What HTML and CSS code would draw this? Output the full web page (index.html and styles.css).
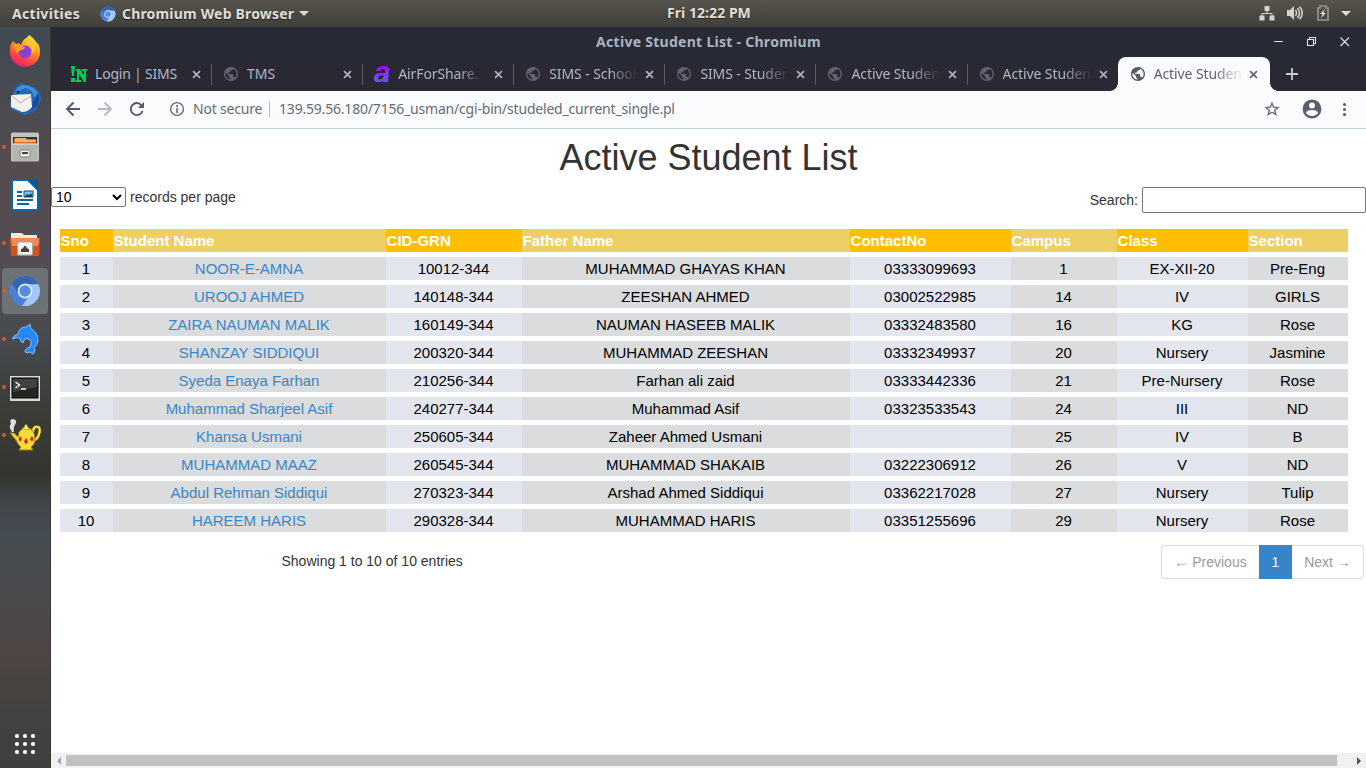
FILE: index.html
```html
<!DOCTYPE html>
<html lang="en">
<head>
<meta charset="utf-8">
<title>Active Student List</title>
<link rel="stylesheet" href="styles.css">
</head>
<body>
<svg class="defs" width="0" height="0">
  <symbol id="globe" viewBox="0.6 0.6 22.8 22.8"><path fill="currentColor" d="M12 2C6.48 2 2 6.48 2 12s4.48 10 10 10 10-4.48 10-10S17.52 2 12 2zm-1 17.93c-3.95-.49-7-3.85-7-7.93 0-.62.08-1.21.21-1.79L9 15v1c0 1.1.9 2 2 2v1.93zm6.9-2.54c-.26-.81-1-1.39-1.9-1.39h-1v-3c0-.55-.45-1-1-1H8v-2h2c.55 0 1-.45 1-1V7h2c1.1 0 2-.9 2-2v-.41c2.93 1.19 5 4.06 5 7.41 0 2.08-.8 3.97-2.1 5.39z"/></symbol>
  <symbol id="close" viewBox="0 0 10 10"><path d="M1.2 1.2 8.8 8.8M8.8 1.2 1.2 8.8" stroke="currentColor" stroke-width="1.8"/></symbol>
  <symbol id="chromium" viewBox="0 0 32 32"><circle cx="16" cy="16" r="15" fill="#5b8bdf"/><path d="M16 16 3 8.5A15 15 0 0 0 13 30.7L20 19z" fill="#4c7fd6"/><path d="M3 8.5A15 15 0 0 1 29.4 9.3H16L9.8 19.5z" fill="#3465b5"/><path d="M16 9.3h13.3A15 15 0 0 1 13.2 30.8L21.8 19z" fill="#a5c7f7"/><circle cx="16" cy="16" r="7.4" fill="#dce9fc"/><circle cx="16" cy="16" r="5.7" fill="#558ce5"/></symbol>
</svg>
<header class="topbar">
  <div class="top-left"><span class="activities">Activities</span><svg class="app-logo"><use href="#chromium"/></svg><span class="app-name">Chromium Web Browser</span><i class="caret"></i></div>
  <div class="clock">Fri 12:22 PM</div>
  <div class="tray">
    <svg width="16" height="16"><path d="M5.5 1h5v5h-5zM.5 10.500h5v5h-5zM10.500 10.500h5v5h-5z" fill="#d5d3cf"/><path d="M8 6v2.500M3 11V8.500h10V11" stroke="#d5d3cf" fill="none"/></svg>
    <svg width="16" height="16"><path d="M0 5h3l4-4v14l-4-4H0z" fill="#d5d3cf"/><path d="M8.500 5q2 3 0 6M10.500 3q4 5 0 10M12.500 1.500q5.500 6.500 0 13" stroke="#d5d3cf" stroke-width="1.500" fill="none"/></svg>
    <svg width="14" height="16"><path d="M4 3V1h6v2h2v12H2V3z" stroke="#96948e" stroke-width="1.700" fill="none"/><path d="M9 4 4 9h2.500L5 13l5-5H7.500z" fill="#dedcd8"/></svg>
    <i class="caret"></i>
  </div>
</header>
<div class="desktop">
<nav class="dock">
  <div class="app"><svg viewBox="0 0 32 32"><defs><linearGradient id="ff" x1=".8" y1="0" x2=".3" y2="1"><stop stop-color="#fff34f"/><stop offset=".4" stop-color="#ff9a24"/><stop offset=".75" stop-color="#ff4242"/><stop offset="1" stop-color="#e51e79"/></linearGradient><radialGradient id="fp"><stop stop-color="#7746ce"/><stop offset="1" stop-color="#9a3bda"/></radialGradient></defs><path d="M4 6 7 9 10 8 12 10C14 3 19 3 20 0C25 3 26 6 28 8Q31 10 31 17A15 15 0 0 1 1 17Q0 11 4 6z" fill="url(#ff)"/><circle cx="16" cy="17" r="6.500" fill="url(#fp)"/><path d="M4 9q5-1 7 2l5 1q-1 3-4 3-3 1-3 4-4-4-5-10" fill="#ff9b28"/><path d="M15 10q6-1 8 3l-1-1q2 4 0 7 6-3 3-10-3-5-5-8-2 5-5 9" fill="#ffc52e"/></svg></div>
  <div class="app"><svg viewBox="0 0 32 32"><path d="M4 11C5 4 10 0 13 0l2 2C25 1 32 8 32 16q-1 5-4 7 1 4-6 8l2-3q-3 3-8 4L3 27Q-1 20 4 11" fill="#2267b9"/><path d="M14 2Q8 3 6 10l10-5q8 0 9 10l5-4Q24 2 14 2" fill="#3f93d8"/><path d="m2 12 20-1 1 13q-4 5-10 5L2 24z" fill="#f4f1ea"/><path d="m2 12 9 8 11-7" fill="none" stroke="#b9b4ac"/><circle cx="9" cy="9" r="1.500" fill="#17314d"/><path d="m25 17 4-8q3 8-2 15l-5 3z" fill="#1a4d9d"/></svg></div>
  <div class="app on"><svg viewBox="0 0 32 32"><rect x="2" y="1.500" width="28" height="29" rx="1.500" fill="#c2c2bf"/><path d="M4 6h24v8H4z" fill="#38332e"/><path d="M5 8h22v6H5z" fill="#df6e25"/><path d="M6 7h11l1 2h9v2H6z" fill="#f3b26c"/><path d="M3 13h26v16.500H3z" fill="#b4b4b1"/><path d="M3 13h26" stroke="#e7e7e5"/><rect x="11" y="19" width="10" height="7" rx="1.500" fill="#eee" stroke="#7c7c79"/><path d="M13 21h6v2h-6z" fill="#444"/></svg></div>
  <div class="app"><svg viewBox="0 0 32 32"><path d="M4 1h15l10 10v20H3V1z" fill="#fff" stroke="#0369a3" stroke-width="2"/><path d="M19 0h10v11z" fill="#07598b"/><path d="M8 13h5M8 17h5M8 21h16M8 25h12" stroke="#0369a3" stroke-width="2"/><path d="M15 12h9v6h-9z" fill="#74c9ef" stroke="#12496b"/><path d="m15 18 3-3 2 1 2-2 2 4z" fill="#17445f"/></svg></div>
  <div class="app on"><svg viewBox="0 -3 32 32"><path d="M2 6V3h11l2 2h13v5H2z" fill="#eee8e1"/><path d="M1 8h30l-1 18H2z" fill="#d5511f"/><path d="M2 8h28l-1 8H3z" fill="#ec8b59"/><rect x="8.500" y="12" width="15" height="13" rx="1.500" fill="#f5f5ef" stroke="#aaa89f"/><path d="M12 22v-3h1.500v-1.500h1.500V16h2v1.500h1.500V19H20v3z" fill="#40403c"/></svg></div>
  <div class="app on selected"><svg><use href="#chromium"/></svg></div>
  <div class="app on"><svg viewBox="0 0 32 32"><path d="M3 16Q5 12 9 11 10 4 17 4l4-3 .5 4q8 5 7.500 13-.5 4-3.500 6.500Q27 28 24 31l-3-2q-3 2-5 0 0-4 5-5 3-7-2-8l-3-1-2 5q-3-1-3-5-4-1-8 1z" fill="#2389f7" stroke="#a5d2ff" stroke-width=".8"/></svg></div>
  <div class="app on"><svg viewBox="0 0 32 32"><rect x="1" y="5" width="30" height="25" fill="#d8d8d6"/><rect x="3" y="7" width="26" height="20" fill="#242523" stroke="#060606"/><path d="M4 8h24v8L4 21z" fill="#41423f"/><path d="m6.500 11 4 3-4 3M12 18h5" stroke="#f4f4f4" stroke-width="1.500" fill="none"/></svg></div>
  <div class="app on"><svg viewBox="0 0 32 32"><path d="M24 13q0-6 5-5 3 1 1 7-1 5-6 7" fill="none" stroke="#9e8d12" stroke-width="3"/><path d="M24 13q0-6 5-5 3 1 1 7-1 5-6 7" fill="none" stroke="#ffe958" stroke-width="1.800"/><path d="M1 14h4l4 4q0-6 4-8h9q4 3 4 10 0 6-4 8l2 3H10l2-3q-3-2-5-7z" fill="#f6dc35" stroke="#958516"/><path d="M13 10q4-5 8 0z" fill="#ffe969"/><circle cx="17" cy="7" r="1.500" fill="#ffe969"/><path d="m11 17 2 3-2 3-1.500-3zm6 2 2 3.500-2 3-2-3zm6-2 1.500 3-1.500 3-2-3z" fill="#d61e34"/><path d="M3 13Q-1 7 2 5 0 0 4 0q5 1 2 6-2 3-1 7" fill="#dedede"/></svg></div>
  <svg class="launcher" viewBox="0 0 20 20"><path d="M2 2h.01M10 2h.01M18 2h.01M2 10h.01M10 10h.01M18 10h.01M2 18h.01M10 18h.01M18 18h.01" stroke="#fff" stroke-width="4.200" stroke-linecap="round"/></svg>
</nav>
<section class="window">
  <div class="titlebar"><h2>Active Student List - Chromium</h2>
    <svg class="window-controls" width="78" height="14"><path d="M1 6.500h9M34.500 4.500h6v6h-6zM36.500 4.500v-2h6v6h-2M67.500 2.500 76 11M76 2.500 67.500 11" fill="none" stroke="#e2e3e5" stroke-width="1.100"/></svg></div>
  <div class="tabs">
    <div class="tab first"><svg class="fav" viewBox="0 0 16 16"><path d="M0 0h4l-1 10H1zM0 12h4v4H0zM5 3h4l4 7V5h-2V3h5v2h-1v11h-2L8 8v6h2v2H5v-2h1V5H5z" fill="#09ca54"/></svg><span class="tab-title">Login | SIMS</span><svg class="x"><use href="#close"/></svg></div>
    <div class="tab"><svg class="fav"><use href="#globe"/></svg><span class="tab-title">TMS</span><svg class="x"><use href="#close"/></svg></div>
    <div class="tab"><svg class="fav" viewBox="0 0 16 16"><defs><linearGradient id="air" x2="0" y2="1"><stop stop-color="#a500ff"/><stop offset="1" stop-color="#5b63ff"/></linearGradient></defs><path d="M2 5Q3 0 10 0q6 0 5 5l-1 11H9v-2q-2 3-6 2-4-1-3-5 1-4 6-4h5l.4-2Q11 3 9 3 7 3 6 5zM10 9.500H7Q4 9.500 4 12q0 2 2 1.500Q9 13 10 9.500z" fill="url(#air)"/></svg><span class="tab-title fade">AirForShare.</span><svg class="x"><use href="#close"/></svg></div>
    <div class="tab"><svg class="fav"><use href="#globe"/></svg><span class="tab-title fade">SIMS - School</span><svg class="x"><use href="#close"/></svg></div>
    <div class="tab"><svg class="fav"><use href="#globe"/></svg><span class="tab-title fade">SIMS - Studen</span><svg class="x"><use href="#close"/></svg></div>
    <div class="tab"><svg class="fav"><use href="#globe"/></svg><span class="tab-title fade">Active Studen</span><svg class="x"><use href="#close"/></svg></div>
    <div class="tab"><svg class="fav"><use href="#globe"/></svg><span class="tab-title fade">Active Studen</span><svg class="x"><use href="#close"/></svg></div>
    <div class="tab active"><svg class="fav"><use href="#globe"/></svg><span class="tab-title fade">Active Studen</span><svg class="x"><use href="#close"/></svg></div>
    <svg class="new-tab" width="12" height="12"><path d="M6 0v12M0 6h12" stroke="#c1cdd5" stroke-width="1.800"/></svg>
  </div>
  <div class="toolbar">
    <svg class="nav-icons" width="82" height="18"><g fill="none" stroke-width="1.900"><path d="M15 9H2M8.500 2.500 2 9l6.500 6.500" stroke="#555966"/><path d="M33 9h13M39.500 2.500 46 9l-6.500 6.500" stroke="#b7b8bd"/><path d="M76.500 5.300A6 6 0 1 0 77.500 11" stroke="#555966"/></g><path d="M79 2v6h-6z" fill="#555966"/></svg>
    <svg class="info" width="16" height="16"><circle cx="8" cy="8" r="6.400" fill="none" stroke="#676b74" stroke-width="1.400"/><path d="M8 4v2M8 7v5" stroke="#676b74" stroke-width="1.600"/></svg>
    <span class="secure">Not secure</span><span class="address">139.59.56.180/7156_usman/cgi-bin/studeled_current_single.pl</span>
    <svg class="toolbar-actions" width="90" height="20"><path d="m10 4.200 1.700 4 4.300.3-3.300 2.800 1.100 4.200-3.800-2.300-3.800 2.300 1.100-4.200L4 8.500l4.300-.3z" fill="none" stroke="#666a75" stroke-width="1.400"/><circle cx="50" cy="10" r="9.400" fill="#5a5d6d"/><circle cx="50" cy="6.500" r="3" fill="#fafbfd"/><path d="M44 14q0-3 6-3t6 3q-2 3-6 3t-6-3" fill="#fafbfd"/><path d="M82.500 5.500h.01M82.500 10.500h.01M82.500 15.500h.01" stroke="#5b5e69" stroke-width="3.100" stroke-linecap="round"/></svg>
  </div>
  <main class="page">
    <h1>Active Student List</h1>
    <div class="filters"><label class="length"><select><option>10</option></select> records per page</label><label class="search">Search: <input type="text"></label></div>
    <table><colgroup><col class="sno"><col class="student"><col class="cid"><col class="father"><col class="contact"><col class="campus"><col class="class"><col class="section"></colgroup>
    <thead><tr><th>Sno</th><th>Student Name</th><th>CID-GRN</th><th>Father Name</th><th>ContactNo</th><th>Campus</th><th>Class</th><th>Section</th></tr></thead>
    <tbody>
    <tr><td>1</td><td><a>NOOR-E-AMNA</a></td><td>10012-344</td><td>MUHAMMAD GHAYAS KHAN</td><td>03333099693</td><td>1</td><td>EX-XII-20</td><td>Pre-Eng</td></tr>
    <tr><td>2</td><td><a>UROOJ AHMED</a></td><td>140148-344</td><td>ZEESHAN AHMED</td><td>03002522985</td><td>14</td><td>IV</td><td>GIRLS</td></tr>
    <tr><td>3</td><td><a>ZAIRA NAUMAN MALIK</a></td><td>160149-344</td><td>NAUMAN HASEEB MALIK</td><td>03332483580</td><td>16</td><td>KG</td><td>Rose</td></tr>
    <tr><td>4</td><td><a>SHANZAY SIDDIQUI</a></td><td>200320-344</td><td>MUHAMMAD ZEESHAN</td><td>03332349937</td><td>20</td><td>Nursery</td><td>Jasmine</td></tr>
    <tr><td>5</td><td><a>Syeda Enaya Farhan</a></td><td>210256-344</td><td>Farhan ali zaid</td><td>03333442336</td><td>21</td><td>Pre-Nursery</td><td>Rose</td></tr>
    <tr><td>6</td><td><a>Muhammad Sharjeel Asif</a></td><td>240277-344</td><td>Muhammad Asif</td><td>03323533543</td><td>24</td><td>III</td><td>ND</td></tr>
    <tr><td>7</td><td><a>Khansa Usmani</a></td><td>250605-344</td><td>Zaheer Ahmed Usmani</td><td></td><td>25</td><td>IV</td><td>B</td></tr>
    <tr><td>8</td><td><a>MUHAMMAD MAAZ</a></td><td>260545-344</td><td>MUHAMMAD SHAKAIB</td><td>03222306912</td><td>26</td><td>V</td><td>ND</td></tr>
    <tr><td>9</td><td><a>Abdul Rehman Siddiqui</a></td><td>270323-344</td><td>Arshad Ahmed Siddiqui</td><td>03362217028</td><td>27</td><td>Nursery</td><td>Tulip</td></tr>
    <tr><td>10</td><td><a>HAREEM HARIS</a></td><td>290328-344</td><td>MUHAMMAD HARIS</td><td>03351255696</td><td>29</td><td>Nursery</td><td>Rose</td></tr>
    </tbody></table>
    <div class="table-footer"><span class="summary">Showing 1 to 10 of 10 entries</span><div class="pagination"><span class="previous">← Previous</span><b>1</b><span class="next">Next →</span></div></div>
  </main>
  <div class="scrollbar"><i class="scroll-left"></i><div class="thumb"></div><i class="scroll-right"></i></div>
</section>
</div>
</body>
</html>
```
FILE: styles.css
```css
* { box-sizing: border-box; }
body { margin: 0; width: 1366px; height: 768px; overflow: hidden; font-family: "Liberation Sans", Arial, sans-serif; font-size: 14px; color: #333; }
.defs { position: absolute; }
svg { display: block; flex: none; }
.topbar { height: 27px; display: grid; grid-template-columns: 667px 84px 1fr; align-items: center; background: linear-gradient(#57544c, #403f39); color: #e0ded9; font: bold 14px/26px "Noto Sans", sans-serif; text-shadow: 0 1px 1px #222; }
.top-left { display: flex; align-items: center; padding-left: 12px; }
.activities { width: 88px; letter-spacing: .3px; }
.app-logo { width: 16px; height: 16px; margin-right: 6px; }
.app-name { letter-spacing: .18px; white-space: nowrap; width: 172px; }
.caret { border: 5px solid transparent; border-top-color: #dedcd8; border-bottom: 0; margin-left: 5px; }
.clock { white-space: nowrap; line-height: 24px; padding-bottom: 1px; letter-spacing: .05px; }
.tray { display: flex; justify-content: flex-end; align-items: center; padding-right: 15px; }
.tray svg { margin-right: 12px; transform: translate(-1px, -1px); }
.tray svg:nth-child(3) { transform: translate(0, -1px); }
.tray .caret { margin-left: -1px; }
.desktop { height: 741px; display: flex; }
.dock { width: 51px; height: 741px; border-right: 1px solid #373735; background: linear-gradient(#404a52 0, #4b4b51 80px, #554c51 155px, #544c54 225px, #494b51 300px, #44484a 328px, #3f4241 350px, #3b3c38 390px, #35352f 450px, #41464a 475px, #454c51 510px, #4a494b 570px, #4e4645 620px, #434240 690px, #3f3f3d); display: flex; flex-direction: column; padding-top: 1px; }
.app { position: relative; width: 46px; height: 46px; margin: 0 0 2px 2px; display: grid; place-items: center; border-radius: 4px; }
.app svg { width: 32px; height: 32px; }
.app.on::before { content: ""; position: absolute; width: 4px; height: 4px; border-radius: 50%; background: #e95420; left: 0; top: 21px; }
.selected { background: #6d7276; }
.launcher { width: 20px; height: 20px; margin: auto 0 14px 15px; }
.window { width: 1315px; height: 741px; display: flex; flex-direction: column; background: #fff; }
.titlebar { height: 30px; flex: none; background: #282b35; display: grid; grid-template-columns: 1fr auto 1fr; align-items: center; color: #a9b3c2; }
.titlebar h2 { grid-column: 2; margin: 0; font: bold 14px/30px "Noto Sans", sans-serif; letter-spacing: .28px; }
.window-controls { justify-self: end; margin-right: 15px; }
.tabs { height: 34px; flex: none; background: #2a2933; padding-left: 9px; display: flex; color: #adb7c3; font: 14px/34px "Noto Sans", sans-serif; }
.tab { width: 151.1px; height: 34px; display: flex; align-items: center; padding: 0 9px 0 12px; position: relative; }
.tab:not(.active):not(:nth-child(7))::after { content: ""; position: absolute; right: -1px; top: 7px; width: 1px; height: 21px; background: #5a5e69; }
.fav { width: 16px; height: 16px; margin-right: 8px; color: #60636f; }
.first .fav { margin-left: -1px; }
.first .tab-title { letter-spacing: -.2px; }
.tab-title { flex: 1; min-width: 0; white-space: nowrap; letter-spacing: -.1px; }
.fade { -webkit-mask-image: linear-gradient(90deg, #000 60px, transparent 89px); mask-image: linear-gradient(90deg, #000 60px, transparent 89px); }
.x { width: 9px; height: 9px; margin-left: 8px; margin-right: 1px; }
.active { width: 152px; background: #fafbfd; border-radius: 8px 8px 0 0; color: #5d6170; padding-right: 11px; }
.active .fav { color: #555966; }
.active::before, .active::after { content: ""; position: absolute; bottom: 0; width: 8px; height: 8px; }
.active::before { left: -8px; background: radial-gradient(circle at 0 0, transparent 7.5px, #fafbfd 8px); }
.active::after { right: -8px; background: radial-gradient(circle at 100% 0, transparent 7.5px, #fafbfd 8px); }
.new-tab { margin: 11px 0 0 16px; }
.toolbar { height: 38px; flex: none; background: #fafbfd; border-bottom: 1px solid #c3d0df; display: flex; align-items: center; padding: 0 0 2px 14px; color: #676b71; font: 14px/36px "Noto Sans", sans-serif; }
.info { margin-left: 22px; margin-right: 8px; }
.secure { width: 77px; height: 16px; line-height: 15px; border-right: 1px solid #b9bbc0; letter-spacing: -.2px; white-space: nowrap; }
.address { margin-left: 9px; letter-spacing: -.195px; white-space: nowrap; }
.toolbar-actions { margin-left: auto; margin-right: 14px; }
.page { height: 624px; flex: none; }
h1 { font-size: 36px; font-weight: 400; line-height: 40px; height: 40px; margin: 9px 0 9px; text-align: center; }
.filters { display: flex; justify-content: space-between; height: 37px; align-items: flex-start; line-height: 20px; }
.length { display: flex; gap: 4px; }
.length select { width: 75px; height: 20px; padding: 0; border: 1px solid #767676; border-radius: 2px; background: #fff; font: 14px/18px "Liberation Sans", Arial, sans-serif; color: #000; }
.search { display: flex; gap: 4px; line-height: 26px; }
.search input { width: 224px; height: 26px; border: 1px solid #767676; border-radius: 2px; }
table { width: 1288px; margin-left: 9px; table-layout: fixed; border-spacing: 0 5px; color: #000; font-size: 15px; line-height: 21px; }
.sno { width: 53px; } .student { width: 273px; } .cid { width: 136px; } .father { width: 328px; } .contact { width: 161px; } .campus { width: 106px; } .class { width: 131px; } .section { width: 100px; }
th, td { padding: 1px 2px 1px 1px; height: 23px; text-align: center; background: #e3e6ef; }
th { text-align: left; color: #fff; background: #ffbf00; padding-left: .6px; }
th:nth-child(even) { background: #edcf65; }
td:nth-child(even) { background: #dadcdd; }
a { color: #3a86c8; }
.table-footer { height: 34px; margin-top: 8px; display: flex; justify-content: space-between; }
.summary { margin-left: 230.5px; line-height: 32px; }
.pagination { display: flex; height: 34px; margin-right: 2px; color: #999; line-height: 32px; text-align: center; }
.previous { width: 98px; border: 1px solid #ddd; border-right: 0; border-radius: 4px 0 0 4px; }
.pagination b { width: 33px; font-weight: 400; color: #fff; background: #3784c8; border: 1px solid #3784c8; }
.next { width: 72px; border: 1px solid #ddd; border-left: 0; border-radius: 0 4px 4px 0; }
.scrollbar { height: 15px; flex: none; display: grid; grid-template-columns: 15px 1fr 15px; align-items: center; background: #f1f1f1; }
.thumb { height: 11px; background: #c1c1c1; margin-right: 14px; }
.scroll-left { border: 4px solid transparent; border-right-color: #a3a3a3; border-left: 0; width: 4px; justify-self: center; }
.scroll-right { border: 4px solid transparent; border-left-color: #505050; border-right: 0; width: 4px; justify-self: center; }
```
